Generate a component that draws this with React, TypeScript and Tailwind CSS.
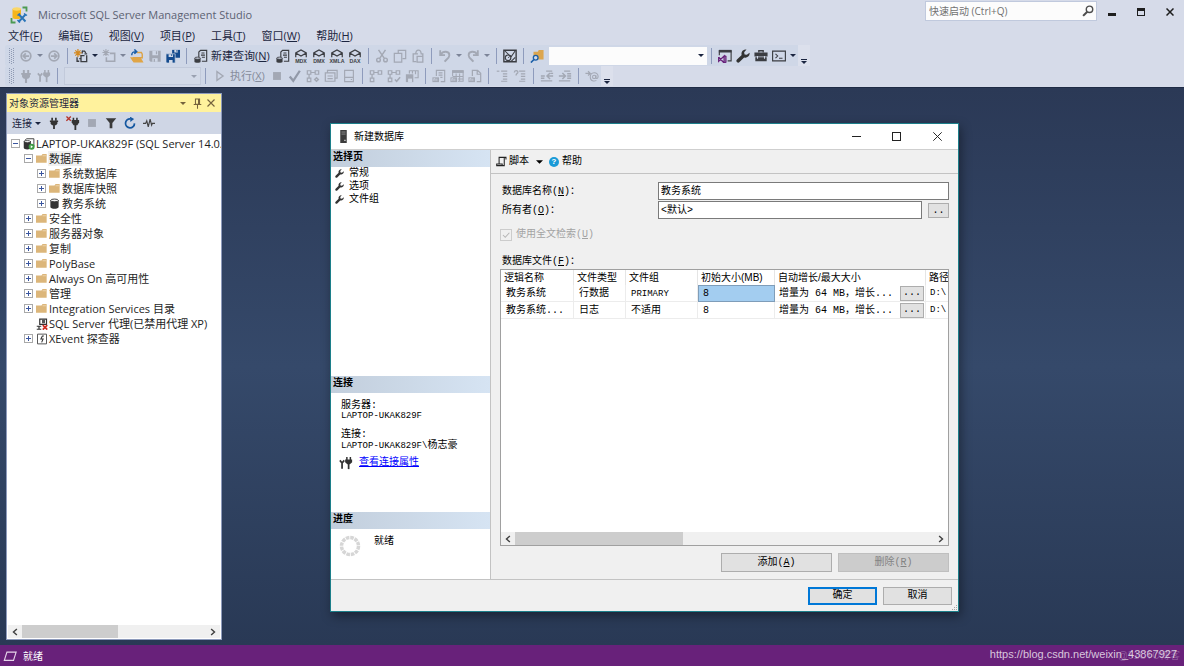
import * as React from "react";
import { clsx } from "clsx";

const UI_FONT = "font-['Open_Sans','Noto_Sans_CJK_SC',sans-serif]";
const DIALOG_FONT = "font-['Liberation_Mono','Noto_Sans_CJK_SC',monospace]";

const GREY = "#a3a8b4";
const DARK = "#3b3d42";

type IconProps = { className?: string; children: React.ReactNode };

function Icon({ className, children }: IconProps) {
  return (
    <svg
      viewBox="0 0 16 16"
      fill="none"
      aria-hidden="true"
      className={clsx("shrink-0", className ?? "h-[14px] w-[14px]")}
    >
      {children}
    </svg>
  );
}

function Caret({ color = "#1b2540" }: { color?: string }) {
  return (
    <svg viewBox="0 0 8 4" className="h-[3px] w-[6px] shrink-0" aria-hidden="true">
      <path d="M0 0h8L4 4z" fill={color} />
    </svg>
  );
}

function Chevron({ left = false }: { left?: boolean }) {
  return (
    <svg viewBox="0 0 8 10" className="h-2 w-[6px]" fill="none" aria-hidden="true">
      <path d={left ? "M6.5 1L2 5l4.500 4" : "M1.500 1L6 5l-4.500 4"} stroke="#404040" strokeWidth="1.900" />
    </svg>
  );
}

/* ---------- icons ---------- */

const Arrow = ({ back = false }: { back?: boolean }) => (
  <Icon>
    <circle cx="8" cy="8" r="5.500" stroke={GREY} strokeWidth="2" />
    <path
      d={back ? "M11.500 8H5M7.800 5L4.800 8l3 3" : "M4.500 8H11M8.200 5l3 3-3 3"}
      stroke={GREY}
      strokeWidth="2"
    />
  </Icon>
);

const NewProject = () => (
  <Icon>
    <path d="M4.500 0v9M0 4.500h9M1.500 1.500l6 6M7.500 1.500l-6 6" stroke="#d48a22" strokeWidth="1.400" />
    <path d="M9 2.500h3l1.500 2M3.500 9.500V14H6M14.500 7v7.500H8V7.500h4" stroke={DARK} strokeWidth="1.500" />
    <path d="M9.500 2v3M6 11h2M12 5.500h3" stroke={DARK} strokeWidth="1.300" />
  </Icon>
);

const NewItem = () => (
  <Icon>
    <path d="M4.500 0v8M.5 4h8M1.500 1.200l6 6M7.500 1.200l-6 6" stroke={GREY} strokeWidth="1.200" />
    <path d="M9 5h5.500v9H5V9.500" stroke={GREY} strokeWidth="1.800" />
  </Icon>
);

const OpenFolder = () => (
  <Icon>
    <path d="M8 4h5l1 2v4H4L3 13" stroke="#dca348" strokeWidth="1.600" />
    <path d="M0 9.500h12l3.500 6H4z" fill="#e0a546" />
    <path d="M2 7C2 3.500 4 3 7 3M5 .5L7.700 3 5 5.500" stroke="#1b5fa8" strokeWidth="1.700" />
  </Icon>
);

const Save = () => (
  <Icon>
    <path d="M1.500 2h13v12.500H3l-1.500-1.500z" fill={GREY} />
    <path d="M5 2h6.500v5H5zM5 10.500h6v4H5z" fill="#d0d8e7" />
    <path d="M9 2.500h1.500v3.500H9zM6.500 11.500H8v3H6.500z" fill={GREY} />
  </Icon>
);

const SaveAll = () => (
  <Icon>
    <path d="M7 1h9v9H7z" fill="#134a8e" />
    <path d="M9.500 1h4v3h-4z" fill="#d0d8e7" />
    <path d="M0 5.500h10.500V16H1l-1-1z" fill="#134a8e" stroke="#d0d8e7" strokeWidth=".8" />
    <path d="M3 6h5v3H3zM3.500 12.500h4V16h-4z" fill="#d0d8e7" />
    <path d="M12 1h1v2h-1zM6 6h1v2H6z" fill="#134a8e" />
  </Icon>
);

const Query = () => (
  <Icon>
    <path d="M5.500 9V3.500l2-2h7v12.500H9" stroke={DARK} strokeWidth="1.300" />
    <path d="M8.500 4.500H12M8 7h4.500M9 9.500h3.500" stroke={DARK} strokeWidth="1.200" />
    <path d="M.5 10.500h7V14.500c0 1.500-7 1.500-7 0z" fill={DARK} />
    <ellipse cx="4" cy="10.500" rx="3.300" ry="1.200" fill="#d0d8e7" stroke={DARK} />
  </Icon>
);

/* cube with a language tag under it */
const Cube = ({ tag }: { tag: string }) => (
  <svg viewBox="0 0 18 16" className="h-[14px] w-4 shrink-0" fill="none" aria-hidden="true">
    <path d="M3 9.500V4.500L9 1.200l6 3.300v5M3 4.500L9 8l6-3.500" stroke={DARK} strokeWidth="1.400" />
    <text
      x="9"
      y="15.500"
      textAnchor="middle"
      fontSize="6"
      fontWeight="700"
      fill={DARK}
      fontFamily="Liberation Sans, sans-serif"
    >
      {tag}
    </text>
  </svg>
);

const Cut = () => (
  <Icon>
    <path d="M4 1l6.500 9.500M12 1L5.500 10.500" stroke={GREY} strokeWidth="1.700" />
    <circle cx="4" cy="12.500" r="2.100" stroke={GREY} strokeWidth="1.600" />
    <circle cx="12" cy="12.500" r="2.100" stroke={GREY} strokeWidth="1.600" />
  </Icon>
);

const Copy = () => (
  <Icon>
    <path d="M6 4.500V1.500h8.500v9.500H11M1.500 5h8.500v10H1.500z" stroke={GREY} strokeWidth="1.400" />
  </Icon>
);

const Paste = () => (
  <Icon>
    <path d="M6 14.500H2.500V5.500H8M11 5.500h2.500v9.500H7V8.500h6.500M5.500 5.500c0-5.500 6-5.500 6-.5" stroke={GREY} strokeWidth="1.500" />
  </Icon>
);

const Undo = ({ redo = false }: { redo?: boolean }) => (
  <Icon className={clsx("h-[14px] w-[14px]", redo && "-scale-x-100")}>
    <path d="M2.500 1.500V7H8M3 6.500C6 1.500 13 2.500 13 7c0 3-3 4.500-5.500 7.500" stroke={GREY} strokeWidth="2.100" />
  </Icon>
);

const Activity = () => (
  <Icon>
    <path d="M1 1.500h14v13H1z" stroke={DARK} strokeWidth="1.600" />
    <path d="M2 2l5 5 2.500 1.500L14 2M9 14.500l5-5" stroke={DARK} strokeWidth="1.200" />
    <circle cx="5.800" cy="10" r="3.200" stroke={DARK} strokeWidth="1.300" />
    <path d="M5.800 10l2-1.500" stroke={DARK} />
  </Icon>
);

const FindFolder = () => (
  <Icon>
    <path d="M4 3h5l1-2h5.500v11H4z" fill="#dca64f" />
    <circle cx="6.500" cy="10" r="2.700" fill="#d0d8e7" stroke="#1b5fa8" strokeWidth="1.500" />
    <path d="M4.500 12L1 15.500" stroke="#1b5fa8" strokeWidth="1.900" />
  </Icon>
);

const VsWindow = () => (
  <Icon>
    <path d="M1.500 7V2h13.500v11.500h-4" stroke={DARK} strokeWidth="1.300" />
    <path d="M1 1h14.500v3H1z" fill={DARK} />
    <path d="M.8 9v5l6.200-6v8L.8 9.500M7 7.500l2 1v6.500l-2 1" stroke="#68217a" strokeWidth="1.500" />
  </Icon>
);

const Wrench = ({ className }: { className?: string }) => (
  <Icon className={className}>
    <path
      d="M15.500 4.200a4.800 4.800 0 01-6.200 5.400L4 14.900a2 2 0 01-2.900-2.900L6.500 6.800A4.800 4.800 0 0112 .6L9.300 3.600l.5 2.600 2.600.5z"
      fill="#333"
    />
  </Icon>
);

const Toolbox = () => (
  <Icon>
    <path d="M5.500 4V2h5v2" stroke={DARK} strokeWidth="1.500" />
    <path d="M.5 4h15v4.500H.5zM1.500 9.500h13V14h-13z" fill={DARK} />
    <path d="M4 8v3M12 8v3" stroke="#d0d8e7" strokeWidth="1.200" />
  </Icon>
);

const Terminal = () => (
  <Icon>
    <path d="M.7 2.500h14.600v11H.7z" stroke={DARK} strokeWidth="1.300" />
    <path d="M4 5.500L6.500 8 4 10.500M8 10.500h4" stroke={DARK} strokeWidth="1.200" />
  </Icon>
);

const Plug = ({ color = GREY, className }: { color?: string; className?: string }) => (
  <Icon className={className}>
    <path d="M5.500 1v4M10.500 1v4" stroke={color} strokeWidth="2.200" />
    <path d="M2.500 4.500h11V6.500h-1v2.500l-2 2h-5l-2-2V6.500h-1z" fill={color} />
    <path d="M8 10v6" stroke={color} strokeWidth="2.400" />
  </Icon>
);

const PlugPair = ({ color = GREY }: { color?: string }) => (
  <Icon>
    <path d="M9 1v3.500M13 1v3.500" stroke={color} strokeWidth="1.700" />
    <path d="M7 4h8v3l-2.500 2.500h-3L7 7z" fill={color} />
    <path d="M11 9v6" stroke={color} strokeWidth="2" />
    <path d="M1 5l2.500 3v6.500M6 5L3.500 8" stroke={color} strokeWidth="2" />
  </Icon>
);

const PlugOff = () => (
  <Icon>
    <path d="M8.500 2v3M12.500 2v3" stroke="#333" strokeWidth="1.800" />
    <path d="M6.500 4.500H15V7l-2 3.500H8.500L6.500 7z" fill="#333" />
    <path d="M10.700 10v6" stroke="#333" strokeWidth="2.100" />
    <path d="M.5.500l5 5M5.500.5l-5 5" stroke="#b5342a" strokeWidth="1.500" />
  </Icon>
);

const Play = () => (
  <Icon>
    <path d="M4.500 3v10l7-5z" stroke={GREY} strokeWidth="1.500" />
  </Icon>
);

const Stop = () => (
  <Icon>
    <path d="M3.500 3.500h9v9h-9z" fill={GREY} />
  </Icon>
);

const Check = () => (
  <Icon>
    <path d="M2 8.500l4 5L13.500 2" stroke="#9299a8" strokeWidth="2.600" />
  </Icon>
);

const Plan = ({ mark }: { mark: string }) => (
  <Icon>
    <path d="M1.500 2h4v4h-4zM10.500 2h4v4h-4zM1.500 10.500h4v4h-4zM5.500 4h5M3.500 6v4.500" stroke={GREY} strokeWidth="1.400" />
    <path d={mark} stroke={GREY} strokeWidth="1.800" />
  </Icon>
);

const Windows = () => (
  <Icon>
    <path d="M4 4V1.500h11v9h-2.500M1.500 4.500h11v9.500h-11zM4 8h6M4 11h6" stroke={GREY} strokeWidth="1.400" />
  </Icon>
);

const SplitDoc = () => (
  <Icon>
    <path d="M3 1.500h10v13H3zM3 9.500h10M10 12h1.500" stroke={GREY} strokeWidth="1.300" />
  </Icon>
);

const Stats = () => (
  <Icon>
    <path d="M5 5V2h10v8h-4M8.500 5V2M12 2v4" stroke={GREY} strokeWidth="1.300" />
    <path d="M1 6h8.500v9H1z" fill={GREY} />
    <path d="M3.500 11H8v4H3.500z" fill="#d0d8e7" />
  </Icon>
);

const Results = ({ kind }: { kind: "text" | "grid" | "file" }) => (
  <Icon>
    {kind === "text" && (
      <path d="M5 8V1.500h9.500v13H10M7.500 4.500H12M7.500 7H12M9.500 9.500H12" stroke={GREY} strokeWidth="1.300" />
    )}
    {kind === "grid" && (
      <>
        <path d="M3 8V2h12v12H9M3 8.500h12M9 11.500h6M7 5v4M11 5v9" stroke={GREY} strokeWidth="1.200" />
        <path d="M2.500 1.500h13v3h-13z" fill={GREY} />
      </>
    )}
    {kind === "file" && <path d="M5 8V1.500h6l3.500 3.500v9.500H10M10.500 2v4h4" stroke={GREY} strokeWidth="1.400" />}
    <path d="M.500 9.500H8V15H.5z" fill={GREY} />
    <path d="M2 13.500v-2.500h1.500v2.500M5.500 11v2.500" stroke="#d0d8e7" strokeWidth=".9" />
  </Icon>
);

const Comment = ({ undo = false }: { undo?: boolean }) => (
  <Icon>
    <path d="M7 2.500h7M9 5.500h5M9 8.500h5M9 11.500h5M7 14h7" stroke={GREY} strokeWidth="1.300" />
    {undo ? (
      <path d="M1.500 4C2 1 6 1.500 5.500 4 5 5.500 3.500 5 3.500 7.500" stroke={GREY} strokeWidth="1.500" />
    ) : (
      <path d="M2 2.500h3" stroke={GREY} strokeWidth="1.300" />
    )}
  </Icon>
);

const Indent = ({ out = false }: { out?: boolean }) => (
  <Icon>
    <path d="M7 2.500h7M1 13.500h13" stroke={GREY} strokeWidth="1.400" />
    <path
      d={out ? "M15 8H8.500M11.500 4.500L8 8l3.500 3.500M1 8h4.500M12 5h3M1 10.500h4" : "M1 8h7M5 4.500L8.500 8 5 11.500M10.500 5.500H15M10.500 8H15M10.500 10.500H15"}
      stroke={GREY}
      strokeWidth="1.700"
    />
  </Icon>
);

const Params = () => (
  <Icon>
    <path d="M.500 5h5M3.500 2.500L6 5 3.500 7.500" stroke={GREY} strokeWidth="1.500" />
    <circle cx="10.500" cy="9" r="1.900" stroke={GREY} strokeWidth="1.200" />
    <path d="M12.500 7v3c0 1.500 2.500 1 2.500-1.500 0-6-9-5.500-9 .5 0 5 4.500 5.500 7 4" stroke={GREY} strokeWidth="1.200" />
  </Icon>
);

const Logo = () => (
  <svg viewBox="0 0 18 18" className="h-[18px] w-[18px] shrink-0" fill="none" aria-hidden="true">
    <path d="M12.500 1.500h4V5.500M1.500 12v4.500H5.500" stroke="#4c9a52" strokeWidth="1.800" />
    <path d="M2.500 3v8.500c0 2 8.500 2 8.500 0V3z" fill="#f5b51c" />
    <ellipse cx="6.750" cy="3" rx="4.250" ry="1.700" fill="#fbd768" />
    <path d="M8.500 8l7 7.500M15.500 8.500L8.500 16" stroke="#2a74b8" strokeWidth="1.900" />
    <path d="M14 7.500l3 2M7.500 14l2.500 2.500M7.500 9.500l2.500-2" stroke="#2a74b8" strokeWidth="1.500" />
  </svg>
);

const Folder = () => (
  <Icon className="h-[11px] w-[11px]">
    <path d="M0 3.500h8L9.500 1.500H15.500v12.500H0z" fill="#dcb67a" />
    <path d="M9.500 4h5" stroke="#f3e2c3" />
  </Icon>
);

const Database = () => (
  <Icon className="h-[11px] w-[11px]">
    <path d="M2 3v10c0 3.500 12 3.500 12 0V3z" fill="#333" />
    <ellipse cx="8" cy="3.500" rx="5.500" ry="2" fill="#f2f2f2" stroke="#333" strokeWidth="1.300" />
  </Icon>
);

const ServerNode = () => (
  <Icon className="h-3 w-3">
    <path d="M1 4v9c0 3 9.500 3 9.500 0V4z" fill="#333" />
    <path d="M2 3.500L5 1h9.500v10l-3 2" stroke="#333" strokeWidth="1.200" />
    <ellipse cx="5.750" cy="4.800" rx="4" ry="1.500" fill="#eee" stroke="#333" />
    <circle cx="11.500" cy="11.500" r="4" fill="#3f9b45" />
    <path d="M10.300 9.500v4l3-2z" fill="#fff" />
  </Icon>
);

const Agent = () => (
  <Icon className="h-3 w-3">
    <path d="M5 1.500h9v7H5zM1 11h6M4 11v4M1 15h6" stroke="#333" strokeWidth="1.600" />
    <path d="M8 2h4v5H8z" fill="#555" />
    <path d="M9 9.500l6 6M15 9.500l-6 6" stroke="#d02b20" strokeWidth="2.200" />
  </Icon>
);

const XEvent = () => (
  <Icon className="h-3 w-3">
    <path d="M2 1.500h12v13H2z" stroke="#555" strokeWidth="1.300" />
    <path d="M10.500 4H8.500L6.500 8h3L7.500 12.500" stroke="#333" strokeWidth="1.400" />
  </Icon>
);

const Spinner = () => (
  <svg viewBox="0 0 22 22" className="h-[22px] w-[22px] shrink-0" fill="none" aria-hidden="true">
    <circle cx="11" cy="11" r="8.500" stroke="#d6d6d6" strokeWidth="3.500" strokeDasharray="3.550 .9" />
  </svg>
);

/* ---------- toolbar pieces ---------- */

const Sep = () => (
  <span className="flex w-[9px] shrink-0 justify-center">
    <span className="h-4 w-px bg-[#8e9bbc]" />
  </span>
);

const Grip = () => (
  <svg viewBox="0 0 5 16" className="mr-[3px] h-4 w-[5px] shrink-0" aria-hidden="true">
    {[0, 2, 4, 6, 8, 10, 12, 14].map((y) => (
      <path key={y} d={`M0 ${y}h1v1H0zM4 ${y}h1v1H4zM2 ${y + 1}h1v1H2z`} fill="#8f9ab3" />
    ))}
  </svg>
);

function ToolButton({ label, disabled, children }: { label: string; disabled?: boolean; children: React.ReactNode }) {
  return (
    <button aria-label={label} disabled={disabled} className="flex h-5 w-[18px] shrink-0 items-center justify-center">
      {children}
    </button>
  );
}

function DropButton({ label, disabled }: { label: string; disabled?: boolean }) {
  return (
    <button aria-label={label} disabled={disabled} className="flex h-5 w-[10px] shrink-0 items-center justify-center">
      <Caret color={disabled ? "#7c8498" : undefined} />
    </button>
  );
}

const Overflow = () => (
  <button aria-label="工具栏选项" className="flex h-5 w-[12px] shrink-0 flex-col items-center justify-end gap-px pb-[2px]">
    <span className="h-px w-[6px] bg-[#1b2540]" />
    <Caret />
  </button>
);

function ComboBox({ label, disabled, className }: { label: string; disabled?: boolean; className: string }) {
  return (
    <div className={clsx("flex h-[18px] shrink-0 items-center", className)}>
      <select aria-label={label} disabled={disabled} className="h-full min-w-0 flex-1 appearance-none outline-none" />
      <span className="mr-[3px]">
        <Caret color={disabled ? "#9aa1b1" : undefined} />
      </span>
    </div>
  );
}

const MENUS = [
  ["文件", "F"],
  ["编辑", "E"],
  ["视图", "V"],
  ["项目", "P"],
  ["工具", "T"],
  ["窗口", "W"],
  ["帮助", "H"],
];

function TitleBar() {
  return (
    <div className="flex h-[27px] items-start">
      <div className="flex h-[27px] flex-1 items-center gap-[10px] pt-[2px] pl-[10px]">
        <Logo />
        <span className="text-[11px] leading-[15px] text-[#5c6273]">Microsoft SQL Server Management Studio</span>
      </div>
      <label className="mt-px flex h-5 w-[172px] items-center border border-[#c0c9dd] bg-[#fcfcfc] pr-[2px] pl-[3px]">
        <input
          aria-label="快速启动"
          placeholder="快速启动 (Ctrl+Q)"
          className="min-w-0 flex-1 text-[10px] leading-[14px] outline-none placeholder:text-[#717171]"
        />
        <Icon className="h-3 w-3">
          <circle cx="10" cy="5.800" r="4.300" stroke="#4d4d4d" strokeWidth="1.900" />
          <path d="M7 9L1.500 14.500" stroke="#4d4d4d" strokeWidth="2.800" />
        </Icon>
      </label>
      <div className="flex h-[23px] items-center">
        <button aria-label="最小化" className="flex w-[29px] justify-center pt-[5px]">
          <span className="h-[3px] w-2 bg-[#1e1e1e]" />
        </button>
        <button aria-label="最大化" className="flex w-[29px] justify-center">
          <span className="h-2 w-2 border border-t-[3px] border-[#1e1e1e]" />
        </button>
        <button aria-label="关闭" className="flex w-[29px] justify-center">
          <Icon className="h-2 w-2">
            <path d="M1 1l14 14M15 1L1 15" stroke="#1e1e1e" strokeWidth="3" />
          </Icon>
        </button>
      </div>
    </div>
  );
}

function MenuBar() {
  return (
    <nav className="flex h-[17px] items-center gap-[16px] pl-2">
      {MENUS.map(([name, key]) => (
        <button key={key} className="text-[11px] leading-[16px] whitespace-nowrap text-[#1b2540]">
          {name}(<u>{key}</u>)
        </button>
      ))}
    </nav>
  );
}

function StandardToolbar() {
  return (
    <div className="mt-px flex h-[21px] pl-[5px]">
      <div className="flex items-center rounded-l-[2px] bg-[#cfd7e7] pl-1">
        <Grip />
        <ToolButton label="向后" disabled><Arrow back /></ToolButton>
        <DropButton label="向后历史" disabled />
        <ToolButton label="向前" disabled><Arrow /></ToolButton>
        <Sep />
        <ToolButton label="新建项目"><NewProject /></ToolButton>
        <DropButton label="新建项目选项" />
        <ToolButton label="添加新项" disabled><NewItem /></ToolButton>
        <DropButton label="添加新项选项" disabled />
        <ToolButton label="打开文件"><OpenFolder /></ToolButton>
        <ToolButton label="保存" disabled><Save /></ToolButton>
        <ToolButton label="全部保存"><SaveAll /></ToolButton>
        <Sep />
        <button className="mr-1 flex h-5 items-center text-[11px] leading-[16px] whitespace-nowrap text-[#1b2540]">
          <span className="flex w-5 justify-center"><Query /></span>
          新建查询(<u>N</u>)
        </button>
        <ToolButton label="数据库引擎查询"><Query /></ToolButton>
        <ToolButton label="MDX 查询"><Cube tag="MDX" /></ToolButton>
        <ToolButton label="DMX 查询"><Cube tag="DMX" /></ToolButton>
        <ToolButton label="XMLA 查询"><Cube tag="XMLA" /></ToolButton>
        <ToolButton label="DAX 查询"><Cube tag="DAX" /></ToolButton>
        <Sep />
        <ToolButton label="剪切" disabled><Cut /></ToolButton>
        <ToolButton label="复制" disabled><Copy /></ToolButton>
        <ToolButton label="粘贴" disabled><Paste /></ToolButton>
        <Sep />
        <ToolButton label="撤消" disabled><Undo /></ToolButton>
        <DropButton label="撤消列表" disabled />
        <ToolButton label="恢复" disabled><Undo redo /></ToolButton>
        <DropButton label="恢复列表" disabled />
        <Sep />
        <ToolButton label="活动监视器"><Activity /></ToolButton>
        <Sep />
        <ToolButton label="在文件中查找"><FindFolder /></ToolButton>
        <ComboBox label="查找" className="ml-[3px] w-[158px] bg-[#fcfcfc]" />
        <Sep />
        <ToolButton label="对象资源管理器"><VsWindow /></ToolButton>
        <ToolButton label="属性窗口"><Wrench /></ToolButton>
        <ToolButton label="工具箱"><Toolbox /></ToolButton>
        <ToolButton label="命令窗口"><Terminal /></ToolButton>
        <DropButton label="其他窗口" />
      </div>
      <div className="flex items-end bg-[#dce0ec]"><Overflow /></div>
    </div>
  );
}

function QueryToolbar() {
  return (
    <div className="flex h-[20px] pl-[5px]">
      <div className="flex items-center rounded-l-[2px] bg-[#cfd7e7] pl-1">
        <Grip />
        <ToolButton label="连接" disabled><Plug /></ToolButton>
        <ToolButton label="更改连接" disabled><PlugPair /></ToolButton>
        <Sep />
        <ComboBox label="可用数据库" disabled className="ml-[2px] w-[137px] border border-[#c2cadb] bg-[#d3dae8]" />
        <Sep />
        <button disabled className="mr-[3px] flex h-5 items-center text-[11px] leading-[16px] whitespace-nowrap text-[#868c9b]">
          <span className="flex w-5 justify-center"><Play /></span>
          执行(<u>X</u>)
        </button>
        <ToolButton label="停止" disabled><Stop /></ToolButton>
        <ToolButton label="分析" disabled><Check /></ToolButton>
        <ToolButton label="显示估计的执行计划" disabled><Plan mark="M10 12l2-2 2 2-2 2z" /></ToolButton>
        <ToolButton label="查询选项" disabled><Windows /></ToolButton>
        <ToolButton label="启用 IntelliSense" disabled><SplitDoc /></ToolButton>
        <Sep />
        <ToolButton label="实际执行计划" disabled><Plan mark="" /></ToolButton>
        <ToolButton label="实时查询统计信息" disabled><Plan mark="M9 12l2 2 4-4.500" /></ToolButton>
        <ToolButton label="客户端统计信息" disabled><Stats /></ToolButton>
        <Sep />
        <ToolButton label="以文本格式显示结果" disabled><Results kind="text" /></ToolButton>
        <ToolButton label="以网格显示结果" disabled><Results kind="grid" /></ToolButton>
        <ToolButton label="将结果保存到文件" disabled><Results kind="file" /></ToolButton>
        <Sep />
        <ToolButton label="注释选中行" disabled><Comment /></ToolButton>
        <ToolButton label="取消注释选中行" disabled><Comment undo /></ToolButton>
        <Sep />
        <ToolButton label="减少缩进" disabled><Indent out /></ToolButton>
        <ToolButton label="增加缩进" disabled><Indent /></ToolButton>
        <Sep />
        <ToolButton label="指定模板参数的值" disabled><Params /></ToolButton>
      </div>
      <div className="flex items-end bg-[#dce0ec]"><Overflow /></div>
    </div>
  );
}

/* ---------- object explorer ---------- */

type Node = {
  text: string;
  level: 0 | 1 | 2;
  icon: React.ReactNode;
  state: "open" | "closed" | "leaf";
  selected?: boolean;
};

const NODES: Node[] = [
  { text: "LAPTOP-UKAK829F (SQL Server 14.0.", level: 0, icon: <ServerNode />, state: "open" },
  { text: "数据库", level: 1, icon: <Folder />, state: "open", selected: true },
  { text: "系统数据库", level: 2, icon: <Folder />, state: "closed" },
  { text: "数据库快照", level: 2, icon: <Folder />, state: "closed" },
  { text: "教务系统", level: 2, icon: <Database />, state: "closed" },
  { text: "安全性", level: 1, icon: <Folder />, state: "closed" },
  { text: "服务器对象", level: 1, icon: <Folder />, state: "closed" },
  { text: "复制", level: 1, icon: <Folder />, state: "closed" },
  { text: "PolyBase", level: 1, icon: <Folder />, state: "closed" },
  { text: "Always On 高可用性", level: 1, icon: <Folder />, state: "closed" },
  { text: "管理", level: 1, icon: <Folder />, state: "closed" },
  { text: "Integration Services 目录", level: 1, icon: <Folder />, state: "closed" },
  { text: "SQL Server 代理(已禁用代理 XP)", level: 1, icon: <Agent />, state: "leaf" },
  { text: "XEvent 探查器", level: 1, icon: <XEvent />, state: "closed" },
];

const INDENT = ["pl-[2px]", "pl-[15px]", "pl-[28px]"];

function Expander({ open }: { open: boolean }) {
  return (
    <svg viewBox="0 0 9 9" className="h-[9px] w-[9px]" shapeRendering="crispEdges" aria-hidden="true">
      <path d="M.5.500h8v8h-8z" fill="#fff" stroke="#a9a9a9" />
      <path d={open ? "M2 4h5v1H2z" : "M2 4h5v1H2zM4 2h1v5H4z"} fill="#3b569f" />
    </svg>
  );
}

function ScrollBar({ thumb, className }: { thumb: string; className?: string }) {
  return (
    <div className={clsx("flex h-[13px] shrink-0 bg-[#f0f0f0]", className)}>
      <button aria-label="向左滚动" className="flex w-[14px] items-center justify-center"><Chevron left /></button>
      <div className="flex-1">
        <div className={clsx("h-full bg-[#cdcdcd]", thumb)} />
      </div>
      <button aria-label="向右滚动" className="flex w-[14px] items-center justify-center"><Chevron /></button>
    </div>
  );
}

function ObjectExplorer() {
  return (
    <aside className="flex w-[216px] shrink-0 flex-col border border-[#8e9bbc] bg-white">
      <header className="flex h-[18px] items-center bg-[#fff29d] pr-[3px] pl-[2px]">
        <h2 className="flex-1 text-[10px] leading-[14px] text-[#1b2540]">对象资源管理器</h2>
        <button aria-label="窗口位置" className="flex w-[14px] justify-center"><Caret color="#75633d" /></button>
        <button aria-label="自动隐藏" className="flex w-[14px] justify-center">
          <Icon className="h-[11px] w-[11px]">
            <path d="M5 1.500h6V9H5zM9.500 2v7M2.500 9.500h11M8 10v5.500" stroke="#75633d" strokeWidth="1.500" />
          </Icon>
        </button>
        <button aria-label="关闭面板" className="flex w-[14px] justify-center">
          <Icon className="h-2 w-2">
            <path d="M1 1l14 14M15 1L1 15" stroke="#75633d" strokeWidth="2.300" />
          </Icon>
        </button>
      </header>
      <div className="flex h-[22px] items-center gap-px bg-[#cfd6e5] pl-[5px]">
        <button className="mr-[3px] flex items-center gap-[3px] text-[10px] leading-[14px] text-[#1b2540]">
          连接 <Caret />
        </button>
        <ToolButton label="连接对象资源管理器"><Plug color="#333" className="h-3 w-3" /></ToolButton>
        <ToolButton label="断开连接"><PlugOff /></ToolButton>
        <ToolButton label="停止" disabled><Stop /></ToolButton>
        <ToolButton label="筛选器">
          <Icon className="h-3 w-3">
            <path d="M1 1.500h14L9.800 8v7H6.200V8z" fill="#3a3a3a" />
          </Icon>
        </ToolButton>
        <ToolButton label="刷新">
          <Icon className="h-3 w-3">
            <path d="M14 8.500A6 6 0 118.500 2.500" stroke="#1558a0" strokeWidth="2.300" />
            <path d="M8-.5l5.500 3.200L8.500 6.500z" fill="#1558a0" />
          </Icon>
        </ToolButton>
        <ToolButton label="活动监视器">
          <Icon className="h-3 w-3">
            <path d="M0 8.500h3.500L5 5l2 8 2.500-10L11.500 11l1-2.500H16" stroke="#444" strokeWidth="1.500" />
          </Icon>
        </ToolButton>
      </div>
      <ul role="tree" className="flex-1 overflow-hidden pt-[2px]">
        {NODES.map((node) => (
          <li key={node.text} role="treeitem" className={clsx("flex h-[15px] items-center", INDENT[node.level])}>
            <span className="flex w-[13px] shrink-0 justify-center">
              {node.state !== "leaf" && <Expander open={node.state === "open"} />}
            </span>
            <span className="flex w-[13px] shrink-0 justify-center">{node.icon}</span>
            <span
              className={clsx(
                "pl-px text-[11px] leading-[15px] whitespace-nowrap text-[#1e1e1e]",
                node.selected && "bg-[#f0f0f0]",
              )}
            >
              {node.text}
            </span>
          </li>
        ))}
      </ul>
      <ScrollBar thumb="w-[52%]" className="mx-px mb-px" />
    </aside>
  );
}

/* ---------- new database dialog ---------- */

const PAGES = ["常规", "选项", "文件组"];

const FILES = [
  { name: "教务系统", type: "行数据", group: "PRIMARY", size: "8", growth: "增量为 64 MB，增长...", path: "D:\\", active: true },
  { name: "教务系统...", type: "日志", group: "不适用", size: "8", growth: "增量为 64 MB，增长...", path: "D:\\", active: false },
];

function SectionTitle({ children }: { children: React.ReactNode }) {
  return (
    <h3 className="h-[17px] bg-linear-to-r from-[#c2cedc] to-[#d6e4f3] pl-[2px] text-[10px] leading-[16px] font-bold text-black">
      {children}
    </h3>
  );
}

function DialogSidebar() {
  return (
    <div className="flex w-[160px] shrink-0 flex-col border-r border-[#c3c3c3] bg-white">
      <section className="flex-1">
        <SectionTitle>选择页</SectionTitle>
        {PAGES.map((page) => (
          <button key={page} className="flex h-[13px] w-full items-center gap-[5px] pl-1 leading-[13px]">
            <Wrench className="h-[9px] w-[9px]" />
            {page}
          </button>
        ))}
      </section>
      <section className="h-[136px]">
        <SectionTitle>连接</SectionTitle>
        <dl className="px-[10px] pt-[7px] leading-[11px]">
          <dt>服务器:</dt>
          <dd className="mb-[7px] text-[9px]">LAPTOP-UKAK829F</dd>
          <dt>连接:</dt>
          <dd><span className="text-[9px]">LAPTOP-UKAK829F\</span>杨志豪</dd>
        </dl>
        <div className="mt-[4px] flex items-center gap-[6px] pl-2">
          <PlugPair color="#333" />
          <a href="#properties" className="leading-[14px] text-[#0000ff] underline">查看连接属性</a>
        </div>
      </section>
      <section className="h-[67px]">
        <SectionTitle>进度</SectionTitle>
        <div className="flex gap-[13px] pt-[6px] pl-2">
          <Spinner />
          <span className="leading-[14px]">就绪</span>
        </div>
      </section>
    </div>
  );
}

const FIELD = "h-[18px] border border-[#7a7a7a] bg-white px-[2px] pb-[3px] text-[10px] leading-[14px] outline-none";
const BUTTON = "border border-[#adadad] bg-[#e1e1e1] text-[10px] leading-[14px]";
const CELL = "overflow-hidden border-r border-b border-[#ececec] px-[5px] pt-[2px] pb-0 font-normal";
const HEAD = "border-r border-[#e5e5e5] pl-[3px] text-left font-normal";

function FilesTable() {
  return (
    <div className="flex min-h-0 flex-1 flex-col overflow-hidden border border-[#a0a0a0] bg-white">
      <div className="flex-1 overflow-hidden">
        <table className="w-[465px] table-fixed border-separate border-spacing-0 whitespace-nowrap">
          <colgroup>
            <col className="w-[73px]" />
            <col className="w-[52px]" />
            <col className="w-[72px]" />
            <col className="w-[77px]" />
            <col className="w-[151px]" />
            <col className="w-[40px]" />
          </colgroup>
          <thead>
            <tr className="h-[15px] font-['Liberation_Sans','Noto_Sans_CJK_SC',sans-serif] leading-[15px]">
              <th className={HEAD}>逻辑名称</th>
              <th className={HEAD}>文件类型</th>
              <th className={HEAD}>文件组</th>
              <th className={HEAD}>初始大小(MB)</th>
              <th className={HEAD}>自动增长/最大大小</th>
              <th className={HEAD}>路径</th>
            </tr>
          </thead>
          <tbody>
            {FILES.map((file) => (
              <tr key={file.name} className="h-4 leading-[14px]">
                <td className={CELL}>{file.name}</td>
                <td className={CELL}>{file.type}</td>
                <td className={clsx(CELL, file.active && "text-[9px]")}>{file.group}</td>
                <td
                  className={
                    file.active
                      ? "border border-[#7f9db9] bg-[#a3cdf0] px-1"
                      : CELL
                  }
                >
                  {file.size}
                </td>
                <td className="border-r border-b border-[#ececec] p-0">
                  <div className="flex items-center">
                    <span className="flex-1 pt-px pl-1">{file.growth}</span>
                    <button aria-label="更改自动增长" className="mr-px h-[15px] w-6 border border-[#adadad] bg-[#e1e1e1] text-[10px] leading-[12px]">
                      ...
                    </button>
                  </div>
                </td>
                <td className="border-b border-[#ececec] pl-1 text-[9px]">{file.path}</td>
              </tr>
            ))}
          </tbody>
        </table>
      </div>
      <ScrollBar thumb="w-[40%]" />
    </div>
  );
}

function NewDatabaseDialog() {
  return (
    <div
      role="dialog"
      aria-label="新建数据库"
      className={clsx(
        "absolute top-[35px] left-[330px] flex h-[489px] w-[629px] flex-col border border-[#1c7f8a] bg-[#f0f0f0] text-[10px] text-black shadow-[2px_4px_10px_rgba(0,0,0,0.4)]",
        DIALOG_FONT,
      )}
    >
      <header className="flex h-[26px] shrink-0 items-center border-b border-[#cfcfcf] bg-white pb-px pl-[6px]">
        <Icon className="h-[13px] w-[13px]">
          <path d="M4 0h8v16H4z" fill="#3c3c3c" />
          <path d="M5.500 2.500h5M5.500 5h5" stroke="#9a9a9a" />
          <path d="M9 12h1.500v1.500H9z" fill="#eee" />
        </Icon>
        <h2 className={clsx("ml-[4px] flex-1 text-[10px] leading-[14px]", UI_FONT)}>新建数据库</h2>
        <button aria-label="最小化对话框" className="flex w-10 justify-center"><span className="h-px w-[9px] bg-[#222]" /></button>
        <button aria-label="最大化对话框" className="flex w-10 justify-center"><span className="h-[9px] w-[9px] border border-[#222]" /></button>
        <button aria-label="关闭对话框" className="flex w-[42px] justify-center">
          <Icon className="h-[9px] w-[9px]">
            <path d="M.500.500l15 15M15.500.500l-15 15" stroke="#222" strokeWidth="1.700" />
          </Icon>
        </button>
      </header>

      <div className="flex min-h-0 flex-1 border-b border-[#c3c3c3]">
        <DialogSidebar />
        <div className="flex min-w-0 flex-1 flex-col">
          <div className="flex h-6 shrink-0 items-center border-b border-[#c3c3c3] pl-[5px] leading-[14px]">
            <button className="flex items-center gap-[2px]">
              <Icon className="h-[11px] w-[11px]">
                <path d="M4.500 12V2h10v3M12 2v12H1v-2.500h8V14" stroke="#222" strokeWidth="1.500" />
              </Icon>
              脚本
            </button>
            <button aria-label="脚本选项" className="flex w-[20px] justify-center">
              <svg viewBox="0 0 8 4" className="h-1 w-[7px]" aria-hidden="true"><path d="M0 0h8L4 4z" fill="#000" /></svg>
            </button>
            <button className="flex items-center gap-[3px]">
              <span className="flex h-[10px] w-[10px] items-center justify-center rounded-full bg-[#1a9ad7] text-[8px] leading-[10px] font-bold text-white">?</span>
              帮助
            </button>
          </div>

          <form className="flex min-h-0 flex-1 flex-col px-[9px] pt-2 pb-[7px]">
            <div className="flex items-center">
              <label htmlFor="db-name" className="w-[158px] pt-px pl-[2px] leading-[15px]">数据库名称(<u>N</u>)：</label>
              <input id="db-name" defaultValue="教务系统" className={clsx("min-w-0 flex-1", FIELD)} />
            </div>
            <div className="mt-px flex items-center">
              <label htmlFor="db-owner" className="w-[158px] pt-px pl-[2px] leading-[15px]">所有者(<u>O</u>)：</label>
              <input id="db-owner" defaultValue="<默认>" className={clsx("min-w-0 flex-1", FIELD)} />
              <button type="button" aria-label="浏览所有者" className={clsx("ml-[6px] h-[15px] w-[21px]", BUTTON)}>..</button>
            </div>
            <label className="mt-2 flex h-4 items-center gap-[4px] leading-[14px] text-[#a3a3a3]">
              <span className="grid">
                <input
                  type="checkbox"
                  defaultChecked
                  disabled
                  className="col-start-1 row-start-1 h-3 w-3 appearance-none border border-[#cccccc]"
                />
                <Icon className="col-start-1 row-start-1 h-3 w-3">
                  <path d="M4 8l3 3 5.500-6" stroke="#b5b5b5" strokeWidth="1.400" />
                </Icon>
              </span>
              <span>使用全文检索(<u>U</u>)</span>
            </label>
            <div className="mt-[11px] pl-[2px] leading-[15px]">数据库文件(<u>F</u>)：</div>
            <FilesTable />
            <div className="mt-[7px] flex justify-end gap-[6px]">
              <button type="button" className={clsx("h-[19px] w-[111px]", BUTTON)}>添加(<u>A</u>)</button>
              <button type="button" disabled className="h-[19px] w-[111px] border border-[#bfbfbf] bg-[#cccccc] text-[10px] leading-[14px] text-[#838383]">
                删除(<u>R</u>)
              </button>
            </div>
          </form>
        </div>
      </div>

      <footer className="relative flex h-[31px] shrink-0 items-center justify-end gap-[6px] pr-[6px]">
        <button className="h-[18px] w-[69px] border-2 border-[#0078d7] bg-[#e1e1e1] leading-[14px]">确定</button>
        <button className={clsx("h-[18px] w-[69px]", BUTTON)}>取消</button>
        <svg viewBox="0 0 6 6" className="absolute right-0 bottom-0 h-[6px] w-[6px]" aria-hidden="true">
          <path d="M4 0h1v1H4zM2 2h1v1H2zM4 2h1v1H4zM0 4h1v1H0zM2 4h1v1H2zM4 4h1v1H4z" fill="#a5a5a5" />
        </svg>
      </footer>
    </div>
  );
}

function StatusBar() {
  return (
    <footer className="flex h-[21px] shrink-0 items-center bg-[#68217a] pr-1 pl-[3px] text-white">
      <Icon className="h-[14px] w-[14px]">
        <path d="M4.500 3.500h10.500L12 13H1.500z" stroke="#e6d5ea" strokeWidth="1.300" />
      </Icon>
      <span className="ml-[6px] flex-1 text-[10px] leading-[14px]">就绪</span>
      <div className="relative mb-[5px] font-['Liberation_Sans','Noto_Sans_CJK_SC',sans-serif] leading-[14px]">
        <span className="mr-[3px] text-[11px] text-white/75">https://blog.csdn.net/weixin_43867927</span>
        <span className="absolute right-0 bottom-[-2px] text-[10px] whitespace-nowrap text-white/25">@51CTO博客</span>
      </div>
    </footer>
  );
}

export default function App() {
  return (
    <div className={clsx("flex h-screen min-h-[640px] flex-col overflow-hidden", UI_FONT)}>
      <div className="h-[88px] shrink-0 border-b border-[#1f2b45] bg-[#d6dbe9]">
        <TitleBar />
        <MenuBar />
        <StandardToolbar />
        <QueryToolbar />
      </div>
      <main className="relative flex min-h-0 flex-1 bg-linear-to-b from-[#2b3956] via-[#35496a] to-[#293955] px-[6px] pt-[5px] pb-[5px]">
        <ObjectExplorer />
        <NewDatabaseDialog />
      </main>
      <StatusBar />
    </div>
  );
}
